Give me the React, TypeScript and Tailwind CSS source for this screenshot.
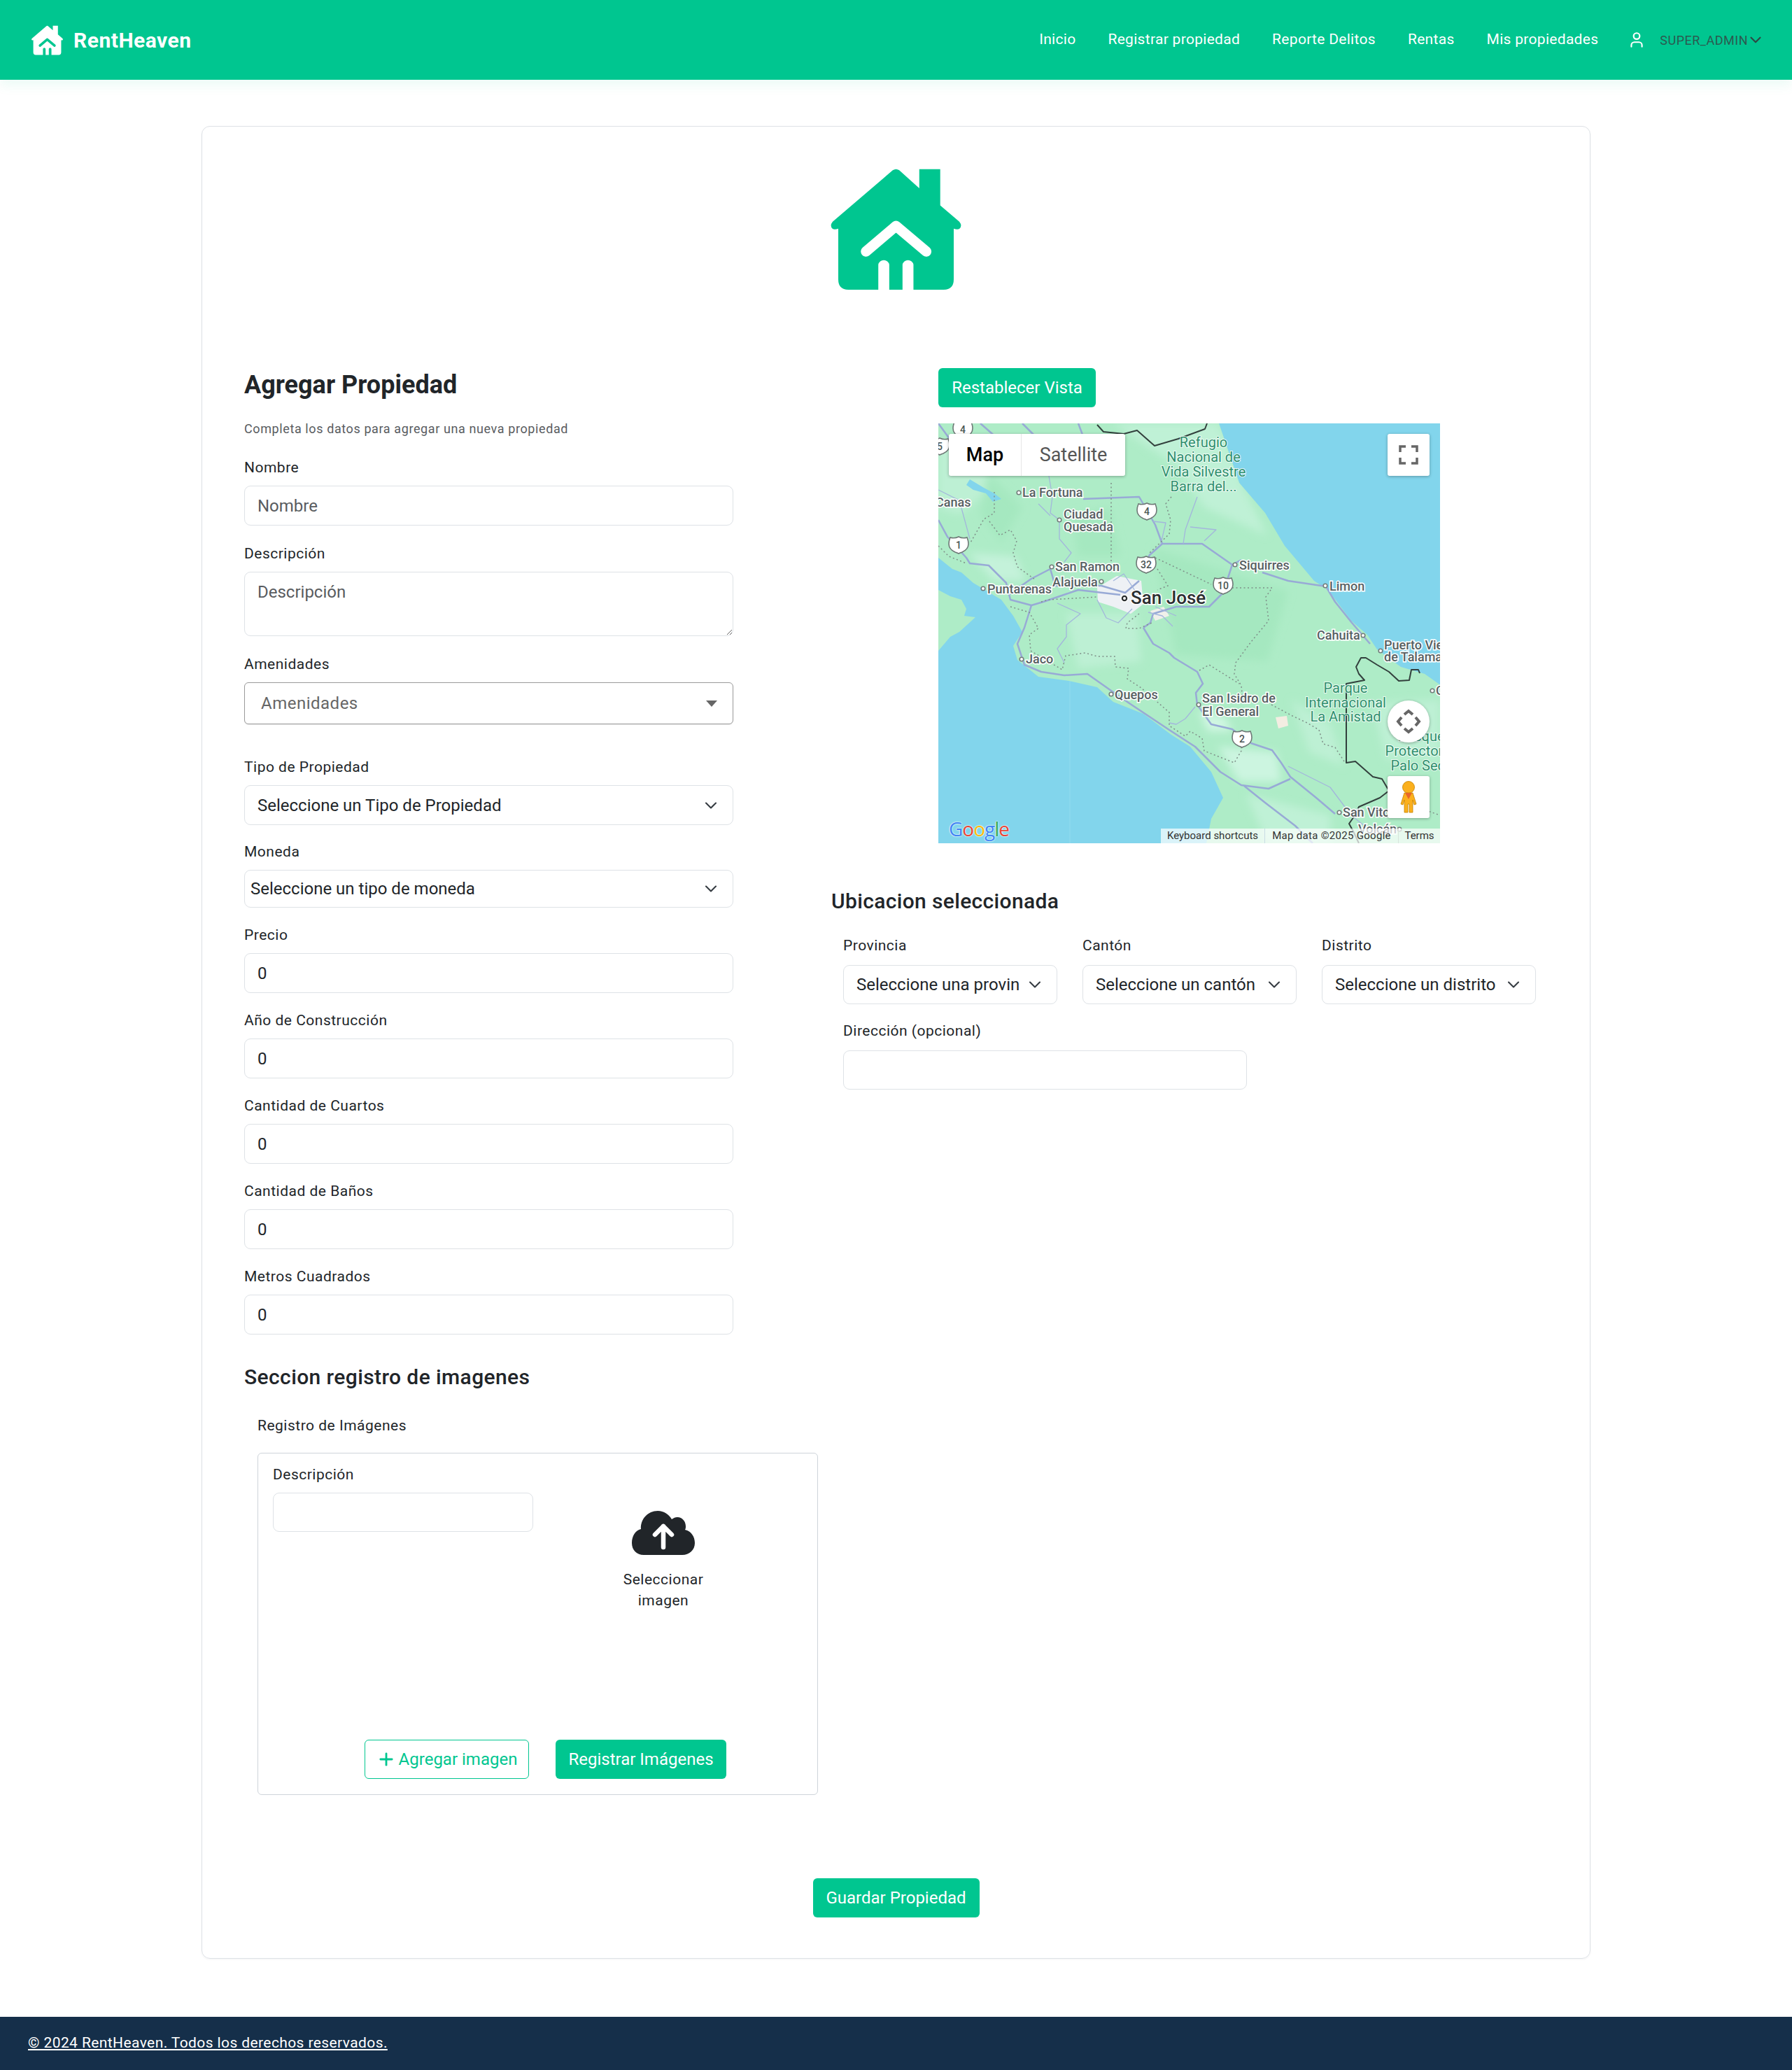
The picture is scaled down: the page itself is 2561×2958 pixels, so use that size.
import { ChevronDown, Plus, User } from 'lucide-react';

function HouseIcon({ className, cutClass }: { className: string; cutClass: string }) {
  return (
    <svg className={className} viewBox="0 0 560 520" fill="currentColor">
      <path d="M266 7Q280-3 294 7L380 84V2H470V158L552 228Q566 245 553 258Q545 264 528 258V475Q528 520 485 520H355V412A24 24 0 0 0 308 412V520H251V412A24 24 0 0 0 204 412V520H75Q32 520 32 475V258Q15 264 7 258Q-6 245 8 228Z" />
      <path d="M151 356L280 246L410 356" fill="none" strokeWidth="44" strokeLinecap="round" strokeLinejoin="round" className={cutClass} />
    </svg>
  );
}

const placeLabels = [
  { t: 'La Fortuna', x: 120, y: 105 },
  { t: 'Canas', x: -4, y: 119 },
  { t: 'Ciudad', x: 179, y: 136 },
  { t: 'Quesada', x: 179, y: 154 },
  { t: 'San Ramon', x: 167, y: 211 },
  { t: 'Alajuela', x: 163, y: 233 },
  { t: 'Puntarenas', x: 70, y: 243 },
  { t: 'Siquirres', x: 430, y: 209 },
  { t: 'Limon', x: 559, y: 239 },
  { t: 'Cahuita', x: 541, y: 309 },
  { t: 'Puerto Viejo', x: 637, y: 323 },
  { t: 'de Talamanca', x: 637, y: 340 },
  { t: 'Jaco', x: 125, y: 343 },
  { t: 'Quepos', x: 252, y: 394 },
  { t: 'San Isidro de', x: 377, y: 399 },
  { t: 'El General', x: 377, y: 418 },
  { t: 'San Vito', x: 578, y: 562 },
  { t: 'Volcán', x: 600, y: 586 },
  { t: 'Ciudad Neily', x: 711, y: 388 },
];

const parkLabels = [
  { t: 'Refugio', x: 379, y: 34 },
  { t: 'Nacional de', x: 379, y: 55 },
  { t: 'Vida Silvestre', x: 379, y: 76 },
  { t: 'Barra del...', x: 379, y: 97 },
  { t: 'Parque', x: 582, y: 385 },
  { t: 'Internacional', x: 582, y: 406 },
  { t: 'La Amistad', x: 582, y: 426 },
  { t: 'Bosque', x: 690, y: 454 },
  { t: 'Protector', x: 680, y: 475 },
  { t: 'Palo Seco', x: 691, y: 496 },
];

const shields = [
  { t: '4', x: 35, y: 9 },
  { t: '5', x: 2, y: 33 },
  { t: '4', x: 298, y: 126 },
  { t: '1', x: 29, y: 174 },
  { t: '32', x: 297, y: 202 },
  { t: '10', x: 407, y: 232 },
  { t: '2', x: 434, y: 451 },
];

const bullets = [
  [115, 99], [173, 138], [162, 205], [233, 226], [64, 236], [119, 337], [247, 387], [372, 402],
  [424, 202], [553, 232], [607, 303], [632, 325], [573, 556], [659, 580], [706, 382],
];

const mainRoads = [
  'M0 138L13 162L40 192L45 200L72 203L97 228L103 252L133 260L150 255L200 238L260 245',
  'M133 260L123 292L113 315L123 345L147 355L180 360L213 358L247 382L273 400L330 438L367 462L403 498L433 517L472 522L503 508',
  'M293 292L307 315L330 328L337 335L370 355L378 372L368 385L370 402L390 430L420 437L447 457L477 467L490 485L503 505L540 535L567 558',
  'M437 518L467 542L510 575L535 600',
  'M207 108L287 105L310 145L320 172L302 188L292 205',
  'M320 172L377 172L420 202L433 195M463 213L500 225L554 233L567 255L591 285L617 315',
  'M420 202L407 242L387 262L340 262L307 272L303 285L293 292',
  'M287 225L267 242L233 232L167 232L160 208L133 222L100 245',
  'M0 0L40 55M200 0L215 40M120 0L140 20M60 0L100 35',
];

const thinRoads = [
  'M163 105L160 128L173 138L173 165L190 185L180 198',
  'M370 105L353 152L350 172M360 148L397 152L380 168',
  'M307 140L325 142L318 172',
  'M227 252L240 278L257 285L277 265',
  'M170 257L203 272L183 288L183 305L170 322L180 342',
  'M367 405L353 422L340 430L330 428',
  'M143 115L160 132M158 75L163 105',
  'M250 225L265 215L285 245M300 270L320 275L335 290M310 262L340 275',
  'M500 490L560 520L590 560L615 580',
  'M0 95L30 110L45 165',
];

const dotted = [
  'M247 85V198',
  'M80 98V128L65 137L45 172M73 140L88 160L103 152L112 168L107 185L113 205L138 223',
  'M103 262L130 270L143 293L130 302L132 325L177 352L182 332L210 328L227 333L252 333L253 348L272 350L270 365L290 378L330 413L330 432L353 447L360 440L377 450L380 468L423 485L433 468V450',
  'M147 255L157 252L193 250L227 248',
  'M287 272L270 285L268 293L287 293L305 285',
  'M310 192L390 230M313 208L328 232L313 238',
  'M420 235H477L468 248L472 282L447 312L425 342L423 358L433 375L435 395',
  'M373 353L387 345L430 372M333 105L325 115L332 138L330 158L302 185',
  'M476 402L506 418L527 428L544 438L550 458L567 463L580 483',
  'M0 175L15 190L40 200M660 540L717 560',
];

function CostaRicaMap() {
  return (
    <svg className="absolute inset-0 w-full h-full" viewBox="0 0 717 600">
      <defs>
        <filter id="soft" x="-10%" y="-10%" width="120%" height="120%">
          <feGaussianBlur stdDeviation="6" />
        </filter>
        <filter id="edge">
          <feGaussianBlur stdDeviation="0.5" />
        </filter>
        <clipPath id="land">
          <path d="M0 0H401L430 85L467 128L495 175L537 225L557 238L590 282L613 302L627 323L661 348L695 358L719 375V600H383L390 565L407 535L390 498L360 462L333 445L293 415L250 398L227 377L187 368L143 362L113 338L107 318L120 298L107 275L90 252L65 237L50 228L33 213L20 208L0 192Z" />
        </clipPath>
      </defs>
      <rect width="717" height="600" fill="#82d5ec" />
      <path d="M188 368V600" stroke="#92dcef" />
      <g filter="url(#edge)">
        <path
          d="M0 0H401L430 85L467 128L495 175L537 225L557 238L590 282L613 302L627 323L661 348L695 358L719 375V600H383L390 565L407 535L390 498L360 462L333 445L293 415L250 398L227 377L187 368L143 362L113 338L107 318L120 298L107 275L90 252L65 237L50 228L33 213L20 208L0 192Z"
          fill="#aeecc7"
        />
        <path d="M0 238L17 247L33 252L40 265L37 275L53 277L30 298L17 305L0 325Z" fill="#aeecc7" />
        <g clipPath="url(#land)">
          <g filter="url(#soft)">
            <path d="M250 0H400L440 100L470 160L380 120L340 60Z" fill="#bff1d6" />
            <path d="M43 185L110 190L125 225L80 225Z" fill="#c4f2da" />
            <path d="M183 272L283 272L290 340L200 350Z" fill="#bdf0d4" />
            <path d="M400 462L483 470L490 512L430 512Z" fill="#ccf5e0" />
            <path d="M372 410L410 420L420 440L385 440Z" fill="#d0f6e2" />
            <path d="M505 395L560 430L580 490L530 470Z" fill="#bdf0d4" />
            <path d="M0 30L60 30L80 90L30 130L0 120Z" fill="#bdf0d4" />
            <path d="M70 70L120 120L90 170L60 130Z" fill="#a5e8c0" />
            <path d="M190 130L245 120L260 190L200 190Z" fill="#a5e8c0" />
            <path d="M307 178L500 240L470 340L340 330Z" fill="#a5e8c0" />
            <path d="M620 400L717 395L717 480L640 480Z" fill="#bdf0d4" />
            <path d="M440 530L560 560L560 600L470 600Z" fill="#bff1d6" />
          </g>
          <path d="M227 235L255 218L290 225L293 258L275 272L250 262L228 255Z" fill="#eef1f5" />
          <path d="M303 268L322 262L330 275L310 282Z" fill="#f0f0ea" />
          <path d="M482 420L498 418L500 432L486 436Z" fill="#f3ede2" />
        </g>
        <path d="M45 80L65 92L80 100L90 108L78 112L68 100L50 95L40 88Z" fill="#82d5ec" />
        <g fill="none" stroke="#98aad6" strokeWidth="2.5" strokeLinejoin="round">
          {mainRoads.map((d) => (
            <path key={d} d={d} />
          ))}
        </g>
        <g fill="none" stroke="#a3b6dc" strokeWidth="1.3" strokeLinejoin="round">
          {thinRoads.map((d) => (
            <path key={d} d={d} />
          ))}
        </g>
        <g fill="none" stroke="#7f9089" strokeWidth="1.5" strokeDasharray="2 3.5">
          {dotted.map((d) => (
            <path key={d} d={d} />
          ))}
        </g>
        <g fill="none" stroke="#33403d" strokeWidth="2" strokeLinejoin="round">
          <path d="M227 2L236 12L265 15L284 10L309 32L343 22L381 8L384 0" />
          <path d="M688 357L686 352H676L673 367L658 368L644 355L627 345L611 335H604L597 348L601 358L609 367L583 372V485L596 483L621 505L634 508L644 525L631 535L601 548L594 562L587 572L594 585L601 600" />
        </g>
      </g>
      <g>
        {shields.map((s) => (
          <g key={`${s.t}-${s.x}`} transform={`translate(${s.x} ${s.y})`}>
            <path
              d="M-12 -11Q-6 -9 0 -12Q6 -9 12 -11Q14 -6 14 -2Q14 6 5 10Q2 11 0 12Q-2 11 -5 10Q-14 6 -14 -2Q-14 -6 -12 -11Z"
              fill="#fff"
              stroke="#6e7876"
              strokeWidth="1.6"
            />
            <text y="5" textAnchor="middle" fontFamily="Roboto, sans-serif" fontSize="14" fontWeight="500" fill="#4a5553">
              {s.t}
            </text>
          </g>
        ))}
      </g>
      <g fill="#fff" stroke="#737d7b" strokeWidth="1.6">
        {bullets.map(([x, y]) => (
          <circle key={`${x}-${y}`} cx={x} cy={y} r="2.8" />
        ))}
      </g>
      <g fontFamily="Roboto, sans-serif" fontSize="18" fontWeight="500" fill="#566062" stroke="#fff" strokeWidth="3" className="[paint-order:stroke]">
        {placeLabels.map((l) => (
          <text key={l.t} x={l.x} y={l.y}>
            {l.t}
          </text>
        ))}
        <text x="275" y="258" fontSize="26" fill="#2b2f30">
          San José
        </text>
      </g>
      <g fontFamily="Roboto, sans-serif" fontSize="20" fill="#2e8f6d" stroke="#fff" strokeOpacity="0.8" strokeWidth="2" textAnchor="middle" className="[paint-order:stroke]">
        {parkLabels.map((l) => (
          <text key={l.t} x={l.x} y={l.y}>
            {l.t}
          </text>
        ))}
      </g>
      <circle cx="266" cy="250" r="5" fill="#2b2f30" stroke="#fff" strokeWidth="1.5" />
      <circle cx="266" cy="250" r="2" fill="#fff" />
    </svg>
  );
}

function MapControls() {
  return (
    <>
      <div className="absolute left-[15px] top-[15px] flex h-[60px] w-[252px] rounded-[3px] bg-white shadow-[0_1px_4px_rgba(0,0,0,0.3)] text-[27px]">
        <div className="flex w-[104px] items-center justify-center border-r border-[#e6e6e6] font-medium text-black">Map</div>
        <div className="flex flex-1 items-center justify-center text-[#565656]">Satellite</div>
      </div>
      <div className="absolute left-[642px] top-[15px] flex h-[60px] w-[60px] items-center justify-center rounded-[3px] bg-white shadow-[0_1px_4px_rgba(0,0,0,0.3)]">
        <svg width="28" height="28" viewBox="0 0 28 28" fill="none" stroke="#666" strokeWidth="3.5">
          <path d="M2 10V2H10M18 2H26V10M26 18V26H18M10 26H2V18" />
        </svg>
      </div>
      <div className="absolute left-[642px] top-[396px] flex h-[60px] w-[60px] items-center justify-center rounded-full bg-white shadow-[0_1px_4px_rgba(0,0,0,0.3)]">
        <svg width="36" height="36" viewBox="0 0 36 36" fill="none" stroke="#666" strokeWidth="4">
          <path d="M12 8L18 3L24 8M12 28L18 33L24 28M8 12L3 18L8 24M28 12L33 18L28 24" />
        </svg>
      </div>
      <div className="absolute left-[642px] top-[504px] flex h-[60px] w-[60px] items-center justify-center rounded-[3px] bg-white shadow-[0_1px_4px_rgba(0,0,0,0.3)]">
        <svg width="26" height="46" viewBox="0 0 26 46">
          <circle cx="13" cy="9" r="8.5" fill="#fbb01d" stroke="#c58300" strokeWidth="0.8" />
          <path d="M7 17H19L24 33L21 34L19 27V45H14V33H12V45H7V27L5 34L2 33Z" fill="#fbb01d" stroke="#c58300" strokeWidth="0.8" />
          <path d="M8 17H18L13 26Z" fill="#e8662a" />
        </svg>
      </div>
      <div className="absolute left-[15px] top-[564px] flex h-[30px] items-center text-[28px] font-medium tracking-[-1px] [font-family:'Open_Sans',sans-serif] [text-shadow:0_0_2px_#fff,0_0_2px_#fff]">
        <span className="text-[#4285f4]">G</span>
        <span className="text-[#ea4335]">o</span>
        <span className="text-[#fbbc05]">o</span>
        <span className="text-[#4285f4]">g</span>
        <span className="text-[#34a853]">l</span>
        <span className="text-[#ea4335]">e</span>
      </div>
      <div className="absolute left-[318px] top-[579px] flex h-[21px] w-[399px] items-center bg-white/70 text-[15px] leading-none text-[#333]">
        <span className="flex h-full w-[149px] items-center justify-center border-r border-[#c9dde4]">Keyboard shortcuts</span>
        <span className="flex h-full w-[191px] items-center justify-center border-r border-[#d8e4dc] tracking-[0.3px]">Map data ©2025 Google</span>
        <span className="flex h-full flex-1 items-center justify-center">Terms</span>
      </div>
    </>
  );
}

function Label({ children }: { children: React.ReactNode }) {
  return <label className="block h-[32px] text-[21px] leading-[32px] tracking-[0.5px] text-[#212529] mb-[10px]">{children}</label>;
}

const inputClass =
  'block w-full h-[57px] rounded-[9px] border border-[#dee2e6] bg-white px-[18px] text-[24px] text-[#212529] outline-none placeholder:text-[#595c5f]';

function InputField({ label, placeholder, value }: { label: string; placeholder?: string; value?: string }) {
  return (
    <div className="mb-[23px]">
      <Label>{label}</Label>
      <input className={inputClass} placeholder={placeholder} defaultValue={value} />
    </div>
  );
}

function SelectBox({ text, className }: { text: string; className: string }) {
  return (
    <div className={`flex items-center justify-between rounded-[9px] border border-[#dee2e6] bg-white text-[24px] text-[#212529] ${className}`}>
      <span className="overflow-hidden whitespace-nowrap">{text}</span>
      <ChevronDown className="ml-[8px] h-[28px] w-[28px] shrink-0 text-[#343a40]" strokeWidth={1.8} />
    </div>
  );
}

export default function App() {
  const navLinks = ['Inicio', 'Registrar propiedad', 'Reporte Delitos', 'Rentas', 'Mis propiedades'];

  return (
    <div className="min-h-[2958px] flex flex-col bg-white font-['Roboto',sans-serif] text-[#212529]">
      <nav className="relative z-10 flex h-[114px] shrink-0 items-center justify-between bg-[#00c690] pl-[45px] pr-[39px] shadow-[0_8px_16px_rgba(0,198,144,0.08)]">
        <div className="flex items-center gap-[15px]">
          <HouseIcon className="h-[45px] w-[45px] text-white" cutClass="stroke-[#00c690]" />
          <span className="text-[30px] font-bold tracking-[0.5px] text-white">RentHeaven</span>
        </div>
        <div className="flex items-center">
          <div className="flex items-center gap-[46px] text-[21px] tracking-[0.3px] text-white">
            {navLinks.map((link) => (
              <a key={link}>{link}</a>
            ))}
          </div>
          <User className="ml-[42px] h-[26px] w-[26px] text-white" strokeWidth={2} />
          <span className="ml-[20px] text-[18px] tracking-[0.5px] text-[#2c5a50]">SUPER_ADMIN</span>
          <ChevronDown className="-ml-[2px] h-[26px] w-[26px] text-[#2c4a44]" strokeWidth={2} />
        </div>
      </nav>

      <main className="mt-[66px] mx-auto w-[1985px] rounded-[12px] border border-[#dee2e6] px-[60px] pt-[60px] pb-[58px] shadow-[0_1px_3px_rgba(0,0,0,0.05)]">
        <div className="flex justify-center">
          <HouseIcon className="h-[173px] w-[187px] text-[#00c690]" cutClass="stroke-white" />
        </div>

        <div className="mt-[112px] flex">
          <section className="w-[839px] shrink-0">
            <h1 className="h-[46px] text-[36px] font-bold leading-[48px] text-[#212529]">Agregar Propiedad</h1>
            <p className="mt-[27px] mb-[26px] h-[27px] text-[18px] leading-[27px] tracking-[0.6px] text-[#595c5f]">Completa los datos para agregar una nueva propiedad</p>

            <div className="w-[699px]">
              <div className="mb-[24px]">
                <Label>Nombre</Label>
                <input className={inputClass} placeholder="Nombre" />
              </div>
              <div className="mb-[24px]">
                <Label>Descripción</Label>
                <textarea className="block h-[92px] w-full rounded-[9px] border border-[#dee2e6] bg-white px-[18px] py-[10px] text-[24px] outline-none placeholder:text-[#595c5f]" placeholder="Descripción" />
              </div>
              <div className="mb-[45px]">
                <Label>Amenidades</Label>
                <div className="flex h-[60px] items-center justify-between rounded-[6px] border border-[#9a9a9a] bg-white pl-[23px] pr-[22px] text-[24px] tracking-[0.5px] text-[#666] shadow-[0_1px_1px_rgba(0,0,0,0.08)]">
                  <span>Amenidades</span>
                  <svg width="16" height="9" viewBox="0 0 16 9" fill="#666">
                    <path d="M0 0H16L8 9Z" />
                  </svg>
                </div>
              </div>
              <div className="mb-[22px]">
                <Label>Tipo de Propiedad</Label>
                <SelectBox text="Seleccione un Tipo de Propiedad" className="h-[57px] pl-[18px] pr-[17px]" />
              </div>
              <div className="mb-[23px]">
                <Label>Moneda</Label>
                <SelectBox text="Seleccione un tipo de moneda" className="h-[54px] pl-[8px] pr-[17px]" />
              </div>
              <InputField label="Precio" value="0" />
              <InputField label="Año de Construcción" value="0" />
              <InputField label="Cantidad de Cuartos" value="0" />
              <InputField label="Cantidad de Baños" value="0" />
              <InputField label="Metros Cuadrados" value="0" />
            </div>

            <h2 className="mt-[38px] h-[45px] text-[30px] font-medium leading-[45px] tracking-[0.4px]">Seccion registro de imagenes</h2>
            <p className="ml-[19px] mt-[31px] h-[32px] text-[21px] leading-[32px] tracking-[0.5px]">Registro de Imágenes</p>
            <div className="ml-[19px] mt-[23px] flex h-[489px] w-[801px] flex-col justify-between rounded-[6px] border border-[#ced4da] pt-[14px] pb-[22px]">
              <div className="flex">
                <div className="ml-[21px] w-[372px]">
                  <Label>Descripción</Label>
                  <input className="block h-[56px] w-full rounded-[9px] border border-[#dee2e6] bg-white px-[18px] outline-none" />
                </div>
                <div className="ml-[91px] flex w-[190px] flex-col items-center pt-[68px]">
                  <svg width="90" height="63" viewBox="0 0 90 63">
                    <path d="M17 63C7 63 0 56 0 46C0 36 5 28 13 26C12 12 23 0 37 0C46 0 53 5 57 12C60 10 62 9 65 9C72 9 77 15 77 22C77 24 77 25 76 27C85 29 90 37 90 46C90 56 82 63 72 63Z" fill="#212529" />
                    <path d="M45 52V22M33 34L45 22L57 34" fill="none" stroke="#fff" strokeWidth="6.5" strokeLinecap="round" strokeLinejoin="round" />
                  </svg>
                  <p className="mt-[20px] w-[150px] text-center text-[21px] leading-[30px] tracking-[0.5px]">Seleccionar imagen</p>
                </div>
              </div>
              <div className="flex gap-[38px] pl-[152px]">
                <button className="flex h-[56px] w-[235px] items-center justify-center gap-[4px] rounded-[6px] border border-[#00c690] bg-white text-[24px] text-[#00c690]">
                  <Plus className="h-[28px] w-[28px]" strokeWidth={2.4} />
                  Agregar imagen
                </button>
                <button className="h-[56px] w-[244px] rounded-[6px] bg-[#00c690] text-[24px] text-white">Registrar Imágenes</button>
              </div>
            </div>
          </section>

          <section className="flex-1">
            <div className="ml-[153px]">
              <button className="h-[56px] w-[225px] rounded-[6px] bg-[#00c690] text-[24px] text-white">Restablecer Vista</button>
              <div className="relative mt-[23px] h-[600px] w-[717px] overflow-hidden">
                <CostaRicaMap />
                <MapControls />
              </div>
            </div>

            <h2 className="mt-[60px] h-[45px] text-[30px] font-medium leading-[45px] tracking-[0.35px]">Ubicacion seleccionada</h2>
            <div className="ml-[17px] mt-[25px]">
              <div className="flex gap-[36px]">
                {[
                  { label: 'Provincia', text: 'Seleccione una provincia' },
                  { label: 'Cantón', text: 'Seleccione un cantón' },
                  { label: 'Distrito', text: 'Seleccione un distrito' },
                ].map((f) => (
                  <div key={f.label} className="w-[306px]">
                    <label className="block h-[32px] text-[21px] leading-[32px] tracking-[0.5px] mb-[12px]">{f.label}</label>
                    <SelectBox text={f.text} className="h-[56px] pl-[18px] pr-[17px]" />
                  </div>
                ))}
              </div>
              <label className="mt-[22px] block h-[32px] text-[21px] leading-[32px] tracking-[0.5px] mb-[12px]">Dirección (opcional)</label>
              <input className="block h-[56px] w-[577px] rounded-[9px] border border-[#dee2e6] bg-white px-[18px] outline-none" />
            </div>
          </section>
        </div>

        <div className="mt-[119px] flex justify-center">
          <button className="h-[56px] w-[238px] rounded-[6px] bg-[#00c690] text-[24px] text-white">Guardar Propiedad</button>
        </div>
      </main>

      <footer className="mt-[83px] flex h-[76px] items-center bg-[#152f4a] pl-[40px] text-[21px] tracking-[0.4px] text-white underline">
        © 2024 RentHeaven. Todos los derechos reservados.
      </footer>
    </div>
  );
}
